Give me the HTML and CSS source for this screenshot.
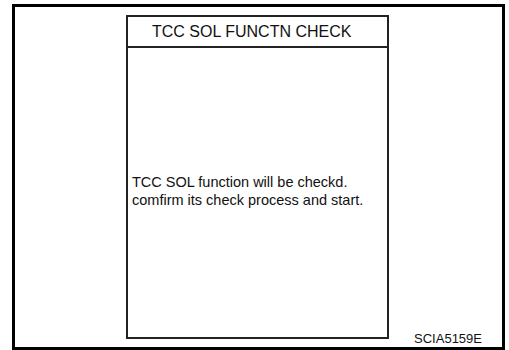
FILE: index.html
```html
<!DOCTYPE html>
<html lang="en">
<head>
  <meta charset="UTF-8" />
  <title>TCC SOL FUNCTN CHECK</title>
  <link rel="stylesheet" href="styles.css">
</head>
<body>
  <div class="frame">
    <div class="screen">
      <div class="screen-title">TCC SOL FUNCTN CHECK</div>
      <div class="screen-body">
        <p>TCC SOL function will be checkd.<br>comfirm its check process and start.</p>
      </div>
    </div>
    <div class="code">SCIA5159E</div>
  </div>
</body>
</html>
```

FILE: styles.css
```css
body {
  margin: 0;
  background: #fff;
  font-family: "Liberation Sans", Arial, sans-serif;
  color: #111;
}
.frame {
  box-sizing: border-box;
  width: 493px;
  height: 346px;
  margin: 4px 0 0 12px;
  border: 3px solid #000;
  padding: 8px 0 0 111px;
  display: flex;
  align-items: flex-end;
}
.screen {
  box-sizing: border-box;
  width: 263px;
  height: 324px;
  border: 2px solid #222;
  display: flex;
  flex-direction: column;
  align-self: flex-start;
}
.screen-title {
  height: 29px;
  line-height: 29px;
  border-bottom: 2px solid #222;
  font-size: 16px;
  padding-left: 24px;
}
.screen-body {
  flex: 1;
  padding: 125px 0 0 4px;
}
.screen-body p {
  margin: 0;
  font-size: 14.5px;
  line-height: 18px;
}
.code {
  margin-left: auto;
  margin-right: 20px;
  font-size: 13px;
  line-height: 15px;
  margin-bottom: 1px;
}
```
